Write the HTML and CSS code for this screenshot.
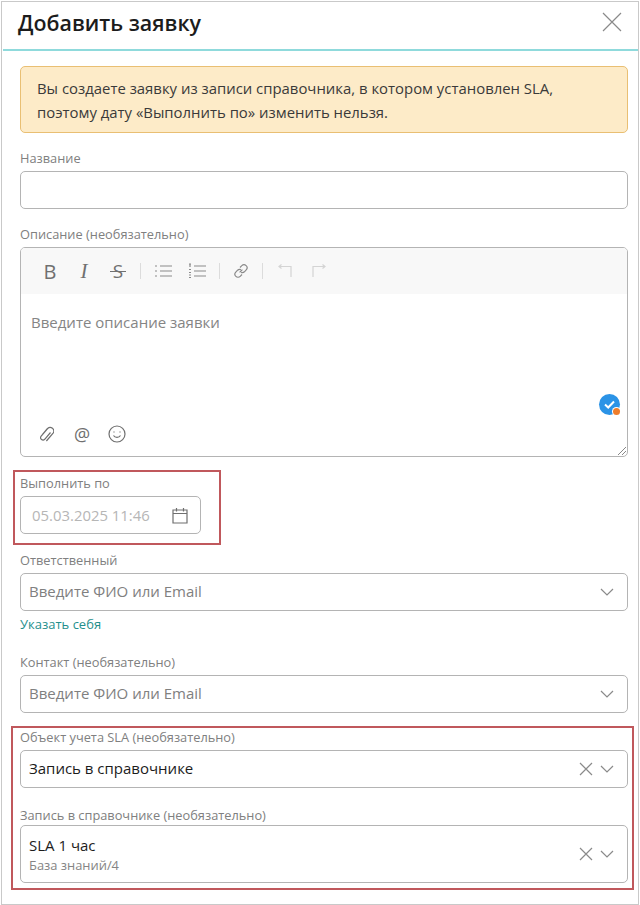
FILE: index.html
```html
<!DOCTYPE html>
<html lang="ru">
<head>
<meta charset="utf-8">
<title>Добавить заявку</title>
<link rel="stylesheet" href="styles.css">
</head>
<body>
<div class="modal">
  <header class="modal-head">
    <h1 class="modal-title">Добавить заявку</h1>
    <button class="close-btn" type="button" aria-label="Закрыть">
      <svg width="20" height="20" viewBox="0 0 20 20"><path class="ic" d="M1 1l18 18M19 1L1 19"/></svg>
    </button>
  </header>
  <div class="modal-body">
    <div class="alert">Вы создаете заявку из записи справочника, в котором установлен SLA,<br>поэтому дату «Выполнить по» изменить нельзя.</div>

    <div class="field field-name">
      <div class="label">Название</div>
      <div class="input"></div>
    </div>

    <div class="field field-desc">
      <div class="label">Описание (необязательно)</div>
      <div class="editor">
        <div class="toolbar">
          <span class="tb tb-b">B</span>
          <span class="tb tb-i">I</span>
          <span class="tb tb-s">S</span>
          <span class="sep"></span>
          <span class="tb"><svg width="18" height="14" viewBox="0 0 18 14"><path class="ic" d="M6 2h12M6 7h12M6 12h12M1 2h2M1 7h2M1 12h2"/></svg></span>
          <span class="tb"><svg width="18" height="16" viewBox="0 0 18 16"><path class="ic" d="M6 3h12M6 8h12M6 13h12M1 1h2M2 1v3M1 6.500h2M1 9.500h2M1 12h2M1 14.500h2"/></svg></span>
          <span class="sep"></span>
          <span class="tb tb-narrow"><svg width="16" height="16" viewBox="0 0 16 16"><path class="ic" d="M6.600 9.400l2.800-2.800M7 4.500l1.800-1.800a3 3 0 0 1 4.400 4.200l-1.800 1.900a3 3 0 0 1-3.300.6M9 11.500l-1.800 1.800a3 3 0 0 1-4.400-4.200l1.800-1.900a3 3 0 0 1 3.300-.6"/></svg></span>
          <span class="sep"></span>
          <span class="tb"><svg width="14" height="14" viewBox="0 0 14 14"><path class="ic ic-faint" d="M13 13V2.500H1M3.500 0.500L1 2.500l2.500 2"/></svg></span>
          <span class="tb"><svg width="14" height="14" viewBox="0 0 14 14"><path class="ic ic-faint" d="M1 13V2.500h12M10.500 0.500L13 2.500l-2.500 2"/></svg></span>
        </div>
        <div class="editor-area">Введите описание заявки</div>
        <div class="editor-foot">
          <span class="ft"><svg width="16" height="18" viewBox="0 0 16 18"><path class="ic ic-dark" d="M12.500 7.500l-5.800 6.800a2.400 2.400 0 0 1-3.700-3l6.600-7.800a3.600 3.600 0 0 1 5.500 4.600l-6.700 7.900M4.500 9.500l5-6"/></svg></span>
          <span class="ft ft-at">@</span>
          <span class="ft"><svg width="18" height="18" viewBox="0 0 18 18"><circle class="ic ic-dark" cx="9" cy="9" r="8"/><path class="ic ic-dark" d="M5.500 10.500c1.500 2.500 5.500 2.500 7 0M6 6.500v1M12 6.500v1"/></svg></span>
        </div>
        <div class="status-badge">
          <svg width="24" height="24" viewBox="0 0 24 24"><circle cx="11.500" cy="11.500" r="10.500" fill="#2b93e6"/><path d="M7 11.500l3.200 3 5.800-6" fill="none" stroke="#fff" stroke-width="2"/><circle cx="18.500" cy="18.500" r="4.500" fill="#fff"/><circle cx="18.500" cy="18.500" r="3.500" fill="#ee7d2b"/></svg>
        </div>
        <svg class="grip" width="10" height="10" viewBox="0 0 10 10"><path d="M1 9l8-8M5 9l4-4" fill="none" stroke="#888" stroke-width="1"/></svg>
      </div>
    </div>

    <div class="mark mark-date">
      <div class="field">
        <div class="label">Выполнить по</div>
        <div class="input input-date">
          <span class="date-val">05.03.2025 11:46</span>
          <svg width="16" height="17" viewBox="0 0 16 17"><path class="ic ic-dark" d="M1 3h14v13H1zM1 6.500h14M4.500 1v3.500M11.500 1v3.500"/></svg>
        </div>
      </div>
    </div>

    <div class="field field-resp">
      <div class="label">Ответственный</div>
      <div class="input select">
        <span class="placeholder">Введите ФИО или Email</span>
        <svg class="chev" width="14" height="8" viewBox="0 0 14 8"><path class="ic" d="M1 1l6 6 6-6"/></svg>
      </div>
      <a class="self-link" href="#">Указать себя</a>
    </div>

    <div class="field field-contact">
      <div class="label">Контакт (необязательно)</div>
      <div class="input select">
        <span class="placeholder">Введите ФИО или Email</span>
        <svg class="chev" width="14" height="8" viewBox="0 0 14 8"><path class="ic" d="M1 1l6 6 6-6"/></svg>
      </div>
    </div>

    <div class="mark mark-sla">
      <div class="field">
        <div class="label">Объект учета SLA (необязательно)</div>
        <div class="input select">
          <span class="value">Запись в справочнике</span>
          <svg class="clear" width="14" height="14" viewBox="0 0 14 14"><path class="ic" d="M1 1l12 12M13 1L1 13"/></svg>
          <svg class="chev" width="14" height="8" viewBox="0 0 14 8"><path class="ic" d="M1 1l6 6 6-6"/></svg>
        </div>
      </div>
      <div class="field field-record">
        <div class="label label-tight">Запись в справочнике (необязательно)</div>
        <div class="input select select-tall">
          <div class="value-stack">
            <span class="value value-main">SLA 1 час</span>
            <span class="value-sub">База знаний/4</span>
          </div>
          <svg class="clear" width="14" height="14" viewBox="0 0 14 14"><path class="ic" d="M1 1l12 12M13 1L1 13"/></svg>
          <svg class="chev" width="14" height="8" viewBox="0 0 14 8"><path class="ic" d="M1 1l6 6 6-6"/></svg>
        </div>
      </div>
    </div>
  </div>
</div>
</body>
</html>
```

FILE: styles.css
```css
*, *::before, *::after { box-sizing: border-box; }
html, body { margin: 0; padding: 0; background: #fff; }
body {
  width: 640px;
  height: 905px;
  overflow: hidden;
  padding: 1px 1px 0;
  font-family: "Open Sans", "Noto Sans", sans-serif;
  color: #222;
}
.modal {
  height: 904px;
  border: 1px solid #c9c9c9;
  display: flex;
  flex-direction: column;
}
.modal-head {
  height: 49px;
  flex: none;
  margin-left: 1px;
  padding: 0 16px 7px 15px;
  border-bottom: 2px solid #8fdadc;
  display: flex;
  align-items: center;
  justify-content: space-between;
}
.modal-title {
  margin: 0;
  font-size: 21.400px;
  font-weight: 600;
  color: #1c1c1c;
}
.close-btn {
  border: 0;
  background: none;
  padding: 0;
  width: 20px;
  height: 20px;
  display: block;
}
.ic { fill: none; stroke: #8a8a8a; stroke-width: 1.2; }
.ic-dark { stroke: #6f6f6f; }
.ic-faint { stroke: #d4d4d4; }

.modal-body {
  padding: 15px 10px 0 18px;
  display: flex;
  flex-direction: column;
}
.alert {
  height: 67px;
  padding: 9px 16px;
  background: #fdebc8;
  border: 1px solid #e9bf73;
  border-radius: 5px;
  font-size: 14.900px;
  line-height: 24px;
  color: #3a3a3a;
}
.label {
  height: 18px;
  margin-bottom: 4px;
  font-size: 12.800px;
  line-height: 18px;
  color: #808080;
}
.label-tight { margin-bottom: 1px; }
.input {
  height: 38px;
  border: 1px solid #b4b4b4;
  border-radius: 5px;
  background: #fff;
}
.field-name { margin-top: 16px; }
.field-desc { margin-top: 16px; }

.editor {
  position: relative;
  height: 210px;
  border: 1px solid #b4b4b4;
  border-radius: 5px;
  display: flex;
  flex-direction: column;
  overflow: hidden;
}
.toolbar {
  height: 46px;
  flex: none;
  padding-left: 17px;
  background: #f8f8f8;
  display: flex;
  align-items: center;
  gap: 10px;
}
.tb {
  width: 24px;
  height: 24px;
  display: flex;
  align-items: center;
  justify-content: center;
  color: #707070;
}
.tb-narrow { width: 22px; }
.tb-b { font-size: 20px; }
.tb-i { font-family: "Liberation Serif", serif; font-style: italic; font-size: 21px; }
.tb-s { position: relative; font-size: 19px; }
.tb-s::after {
  content: "";
  position: absolute;
  left: 4px;
  right: 4px;
  top: 12px;
  height: 1px;
  background: #707070;
}
.sep { width: 1px; height: 16px; background: #dcdcdc; }
.editor-area {
  flex: 1;
  padding: 17px 10px 0;
  font-size: 15px;
  line-height: 22px;
  color: #858585;
}
.editor-foot {
  height: 45px;
  flex: none;
  padding: 0 0 0 15px;
  display: flex;
  align-items: center;
  gap: 15px;
}
.ft {
  width: 20px;
  height: 20px;
  display: flex;
  align-items: center;
  justify-content: center;
}
.ft-at { font-size: 18px; line-height: 20px; color: #6f6f6f; margin-left: 1px; }
.status-badge {
  position: absolute;
  right: 5px;
  bottom: 39px;
  width: 24px;
  height: 24px;
}
.status-badge svg { display: block; }
.grip { position: absolute; right: 0; bottom: 0; }

.mark { position: relative; }
.mark::before {
  content: "";
  position: absolute;
  border: 2px solid #c0585c;
  pointer-events: none;
}
.mark-date { margin-top: 17px; }
.mark-date::before { left: -7px; top: -4px; width: 208px; height: 75px; }
.input-date {
  width: 181px;
  padding: 0 12px 0 11px;
  display: flex;
  align-items: center;
  justify-content: space-between;
}
.date-val { font-size: 14.900px; color: #b6b6b6; }
.field-resp { margin-top: 17px; }
.select {
  padding: 0 13px 0 8px;
  display: flex;
  align-items: center;
  gap: 7px;
}
.select > span, .value-stack { margin-right: auto; }
.placeholder { font-size: 15px; line-height: 20px; padding-bottom: 2px; color: #808080; }
.value { font-size: 15px; line-height: 20px; color: #1c1c1c; }
.select > .value { padding-bottom: 2px; }
.self-link {
  display: block;
  margin-top: 4px;
  font-size: 13px;
  line-height: 18px;
  color: #1f8f8c;
  text-decoration: none;
}
.field-contact { margin-top: 20px; }
.mark-sla { margin-top: 15px; }
.mark-sla::before { left: -9px; top: -2px; width: 623px; height: 164px; }
.field-record { margin-top: 18px; }
.select-tall { height: 58px; }
.value-stack { display: flex; flex-direction: column; }
.value-main { line-height: 22px; }
.value-sub { font-size: 12.900px; line-height: 19px; color: #858585; }
```
